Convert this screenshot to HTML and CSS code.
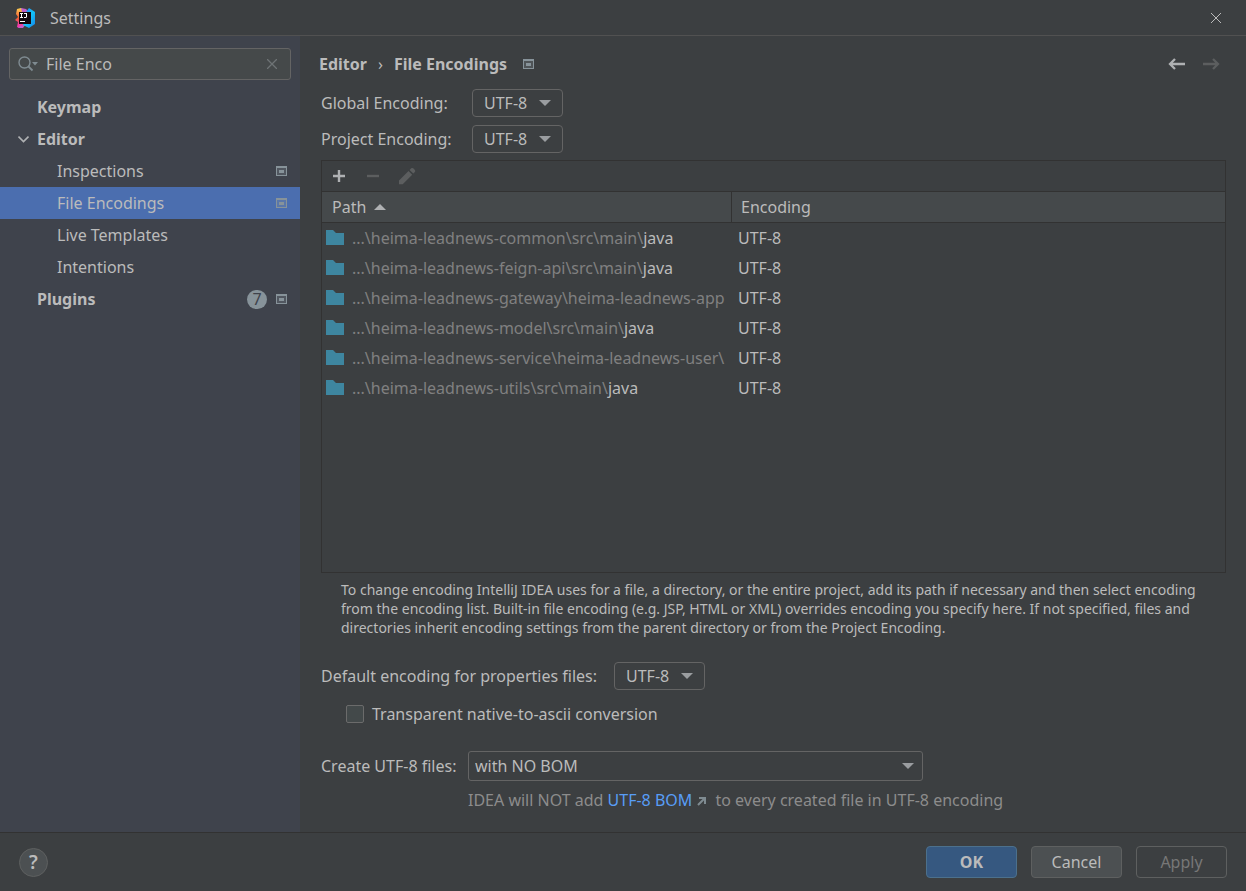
FILE: index.html
```html
<!DOCTYPE html>
<html lang="en">
<head>
<meta charset="utf-8">
<title>Settings</title>
<link rel="stylesheet" href="styles.css">
</head>
<body>
<svg class="defs" width="0" height="0" aria-hidden="true">
  <symbol id="scope" viewBox="0 0 11 10"><path fill="currentColor" fill-rule="evenodd" d="M0 0h11v10H0zM1 2v7h9V2z"/><path fill="currentColor" opacity=".25" d="M1 2h9v7H1z"/><path fill="currentColor" d="M3 4h5v3H3z"/></symbol>
  <symbol id="folder" viewBox="0 0 18 15"><path fill="#3e86a0" d="M0 0h7l3 3h8v12H0z"/></symbol>
</svg>
<div class="window">
  <header class="titlebar">
    <svg class="logo" viewBox="0 0 20 20" aria-hidden="true">
      <defs>
        <linearGradient id="warm" x1="0" y1="0" x2="0" y2="1"><stop offset="0" stop-color="#fdd251"/><stop offset=".35" stop-color="#f97a3d"/><stop offset=".5" stop-color="#f0602f"/><stop offset=".75" stop-color="#f04590"/><stop offset="1" stop-color="#fe2eb8"/></linearGradient>
        <linearGradient id="cool" x1="0" y1="0" x2="1" y2="1"><stop offset="0" stop-color="#2f6df6"/><stop offset=".5" stop-color="#12c5f8"/><stop offset="1" stop-color="#1682e8"/></linearGradient>
      </defs>
      <path fill="url(#warm)" d="M2 1l4-1 5 3v14l-7 3-2-1 1-5-3-2 3-3-2-3z"/>
      <path fill="#c060c8" d="M6 0l5 1 3 3H7zM3 19l8-3-3 4H4z"/>
      <path fill="url(#cool)" d="M11 4l3-4 6 4v12l-6 4-6-3z"/>
      <path fill="#130a10" d="M4 4h12v12H4z"/>
      <path fill="#fff" d="M5 5h3v1H7v3h1v1H5V9h1V6H5zM9 5h3v4l-1 1H9V9h2V6H9zM5 13h5v1H5z"/>
    </svg>
    <h1 class="title">Settings</h1>
    <button class="icon-button close" aria-label="Close"><svg width="12" height="12" viewBox="0 0 12 12"><path stroke="currentColor" d="M1 1l10 10M11 1L1 11"/></svg></button>
  </header>

  <div class="body">
    <aside class="sidebar">
      <div class="search">
        <svg width="21" height="16" viewBox="0 0 21 16" aria-hidden="true"><circle cx="6.500" cy="6.500" r="5.500" fill="none" stroke="#7f8b91" stroke-width="1.400"/><path stroke="#7f8b91" stroke-width="1.800" d="M10.500 10.500l4 4"/><path fill="#7f8b91" d="M14 6h6l-3 3.500z"/></svg>
        <input class="search-input" type="text" value="File Enco" aria-label="Search settings">
        <button class="icon-button clear" aria-label="Clear"><svg width="10" height="10" viewBox="0 0 10 10"><path stroke="currentColor" stroke-width="1.300" d="M0 0l10 10M10 0L0 10"/></svg></button>
      </div>
      <nav class="tree" aria-label="Settings sections">
        <a class="row top" href="#">Keymap</a>
        <a class="row top" href="#"><svg class="chevron" width="11" height="7" viewBox="0 0 11 7" aria-hidden="true"><path fill="none" stroke="#afb1b3" stroke-width="1.600" d="M.5 .6l5 5 5-5"/></svg>Editor</a>
        <a class="row child" href="#">Inspections<span class="marks"><svg class="scope"><use href="#scope"/></svg></span></a>
        <a class="row child selected" href="#" aria-current="page">File Encodings<span class="marks"><svg class="scope"><use href="#scope"/></svg></span></a>
        <a class="row child" href="#">Live Templates</a>
        <a class="row child" href="#">Intentions</a>
        <a class="row top" href="#">Plugins<span class="marks"><span class="count">7</span><svg class="scope"><use href="#scope"/></svg></span></a>
      </nav>
    </aside>

    <main class="main">
      <div class="heading">
        <h2 class="crumbs"><span>Editor</span><span class="sep">›</span><span>File Encodings</span></h2>
        <svg class="scope"><use href="#scope"/></svg>
        <div class="history">
          <button class="icon-button" aria-label="Back"><svg width="17" height="12" viewBox="0 0 17 12"><path fill="none" stroke="#afb1b3" stroke-width="2.300" d="M17 6H2M7 1L2 6l5 5"/></svg></button>
          <button class="icon-button" aria-label="Forward" disabled><svg width="17" height="12" viewBox="0 0 17 12"><path fill="none" stroke="#5c5e5f" stroke-width="2.300" d="M0 6h15M10 1l5 5-5 5"/></svg></button>
        </div>
      </div>

      <div class="form">
        <div class="encodings">
          <label for="global">Global Encoding:</label>
          <span class="combo"><select id="global"><option>UTF-8</option></select></span>
          <label for="project">Project Encoding:</label>
          <span class="combo"><select id="project"><option>UTF-8</option></select></span>
        </div>

        <section class="panel">
          <div class="toolbar">
            <button class="icon-button" aria-label="Add"><svg width="18" height="18" viewBox="0 0 18 18"><path stroke="#afb1b3" stroke-width="2.400" d="M9 3v12M3 9h12"/></svg></button>
            <button class="icon-button" aria-label="Remove" disabled><svg width="18" height="18" viewBox="0 0 18 18"><path stroke="#5c5e5f" stroke-width="2.400" d="M3 9h12"/></svg></button>
            <button class="icon-button" aria-label="Edit" disabled><svg width="18" height="18" viewBox="0 0 18 18"><path fill="#5c5e5f" d="M1 13.500L10.500 4l3.700 3.700L4.700 17.200H1zM11.600 2.900l1.600-1.600q1-.8 2 0l1.700 1.700q.8 1 0 2l-1.600 1.600z"/></svg></button>
          </div>
          <table class="files">
            <colgroup><col class="path-col"><col></colgroup>
            <thead><tr><th aria-sort="ascending">Path<span class="sort"></span></th><th>Encoding</th></tr></thead>
            <tbody>
              <tr><td><svg class="folder"><use href="#folder"/></svg>...\heima-leadnews-common\src\main\<b>java</b></td><td>UTF-8</td></tr>
              <tr><td><svg class="folder"><use href="#folder"/></svg>...\heima-leadnews-feign-api\src\main\<b>java</b></td><td>UTF-8</td></tr>
              <tr><td><svg class="folder"><use href="#folder"/></svg>...\heima-leadnews-gateway\heima-leadnews-app</td><td>UTF-8</td></tr>
              <tr><td><svg class="folder"><use href="#folder"/></svg>...\heima-leadnews-model\src\main\<b>java</b></td><td>UTF-8</td></tr>
              <tr><td><svg class="folder"><use href="#folder"/></svg>...\heima-leadnews-service\heima-leadnews-user\</td><td>UTF-8</td></tr>
              <tr><td><svg class="folder"><use href="#folder"/></svg>...\heima-leadnews-utils\src\main\<b>java</b></td><td>UTF-8</td></tr>
            </tbody>
          </table>
        </section>

        <p class="help">To change encoding IntelliJ IDEA uses for a file, a directory, or the entire project, add its path if necessary and then select encoding<br>from the encoding list. Built-in file encoding (e.g. JSP, HTML or XML) overrides encoding you specify here. If not specified, files and<br>directories inherit encoding settings from the parent directory or from the Project Encoding.</p>

        <div class="field properties">
          <label for="props">Default encoding for properties files:</label>
          <span class="combo"><select id="props"><option>UTF-8</option></select></span>
        </div>
        <label class="check"><input type="checkbox">Transparent native-to-ascii conversion</label>
        <div class="bom">
          <label for="bom">Create UTF-8 files:</label>
          <span class="combo wide"><select id="bom"><option>with NO BOM</option></select></span>
          <p class="hint">IDEA will NOT add <a href="#">UTF-8 BOM<svg class="external" width="9" height="9" viewBox="0 0 9 9" aria-hidden="true"><path fill="none" stroke="#7f8b91" stroke-width="2" d="M1 8l6-6M2 1h6v6"/></svg></a> to every created file in UTF-8 encoding</p>
        </div>
      </div>
    </main>
  </div>

  <footer class="footer">
    <button class="help-button" aria-label="Help">?</button>
    <div class="actions">
      <button class="button primary">OK</button>
      <button class="button">Cancel</button>
      <button class="button" disabled>Apply</button>
    </div>
  </footer>
</div>
</body>
</html>
```
FILE: styles.css
```css
* { box-sizing: border-box; }

body {
  margin: 0;
  background: #3c3f41;
  color: #bbbbbb;
  font: 16px/20px "Noto Sans", "Open Sans", sans-serif;
}

h1, h2, p { margin: 0; font-size: inherit; }
button, input, select { margin: 0; color: inherit; font: inherit; }
a { color: inherit; text-decoration: none; }
svg { flex: none; }
.defs { position: absolute; }

.window { display: flex; flex-direction: column; min-height: 100vh; }

.icon-button {
  display: flex;
  padding: 0;
  border: 0;
  background: none;
}

.titlebar {
  display: flex;
  align-items: center;
  height: 36px;
  padding: 0 24px 0 15px;
  border-bottom: 1px solid #515151;
}
.logo { width: 20px; height: 20px; }
.title { margin-left: 15px; font-weight: 400; }
.close { margin-left: auto; }

.body { display: flex; flex: 1; }

.sidebar { width: 300px; flex: none; background: #3f434c; }
.search {
  display: flex;
  align-items: center;
  height: 32px;
  margin: 12px 9px 11px;
  padding: 0 13px 0 8px;
  border: 1px solid #646464;
  border-radius: 3px;
  background: #45494a;
}
.search-input {
  flex: 1;
  min-width: 0;
  padding: 0 7px;
  border: 0;
  outline: 0;
  background: none;
}
.clear { color: #6e7375; }

.row {
  display: flex;
  align-items: center;
  height: 32px;
  padding: 0 13px 0 37px;
}
.top { font-weight: 700; }
.child { padding-left: 57px; }
.selected { background: #4b6eaf; }
.chevron { margin: 0 8px 0 -19px; }
.marks { display: flex; align-items: center; gap: 9px; margin-left: auto; }
.scope { width: 11px; height: 10px; color: #87939a; }
.count {
  width: 20px;
  border-radius: 10px;
  background: #87939a;
  color: #3f434c;
  font-size: 16px;
  font-weight: 400;
  line-height: 19px;
  text-align: center;
}

.main { display: flex; flex: 1; flex-direction: column; min-width: 0; padding: 18px 20px 22px 19px; }
.heading { display: flex; align-items: center; gap: 16px; }
.crumbs { display: flex; gap: 11px; font-weight: 700; }
.sep { font-weight: 400; }
.history { display: flex; gap: 18px; margin-left: auto; padding-right: 6px; }

.form { display: flex; flex: 1; flex-direction: column; padding: 15px 0 0 2px; }
.encodings {
  display: grid;
  grid-template-columns: 133px max-content;
  align-items: center;
  gap: 8px 18px;
}
.encodings label { white-space: nowrap; }

.combo { display: grid; align-items: center; }
.combo select {
  grid-area: 1 / 1;
  width: 91px;
  height: 28px;
  padding: 0 11px;
  border: 1px solid #646464;
  border-radius: 4px;
  background: none;
  appearance: none;
}
.combo::after {
  grid-area: 1 / 1;
  justify-self: end;
  margin-right: 12px;
  border: 6px solid transparent;
  border-top-color: #9a9da0;
  border-bottom: 0;
  content: "";
  pointer-events: none;
}
.combo.wide select { width: 100%; height: 30px; padding: 0 6px; border-radius: 3px; }
.combo.wide::after { margin-right: 9px; }

.panel { display: flex; flex: 1; flex-direction: column; margin-top: 7px; border: 1px solid #323232; }
.toolbar {
  display: flex;
  align-items: center;
  gap: 16px;
  height: 31px;
  padding: 0 8px;
  border-bottom: 1px solid #323232;
}

.files { width: 100%; border-spacing: 0; table-layout: fixed; }
.path-col { width: 410px; }
.files th {
  height: 31px;
  padding: 0 9px;
  border-bottom: 1px solid #323232;
  background: #45494b;
  font-weight: 400;
  text-align: left;
}
.files th:first-child { padding-left: 10px; border-right: 1px solid #323232; }
.sort {
  display: inline-block;
  margin: 0 0 3px 8px;
  border: 6px solid transparent;
  border-top: 0;
  border-bottom-color: #afb1b3;
}
.files td { height: 30px; padding: 0 6px; overflow: hidden; white-space: nowrap; }
.files td:first-child { padding: 0 0 0 4px; color: #808080; }
.files b { color: #bbbbbb; font-weight: 400; }
.folder { width: 18px; height: 15px; margin-right: 8px; vertical-align: -1px; }

.help { padding: 7px 0 0 20px; font-size: 14px; line-height: 19px; white-space: nowrap; }
.field { display: flex; align-items: center; gap: 17px; }
.properties { margin-top: 25px; }
.check { display: flex; align-items: center; gap: 8px; margin: 14px 0 27px 25px; }
.check input {
  width: 18px;
  height: 18px;
  border: 1px solid #6b6b6b;
  border-radius: 2px;
  background: #43494a;
  appearance: none;
}
.bom {
  display: grid;
  grid-template-columns: 140px minmax(0, 455px) 1fr;
  align-items: center;
  gap: 9px 7px;
}
.bom label { white-space: nowrap; }
.hint { grid-column: 2 / 4; color: #8c8c8c; }
.hint a { color: #589df6; }
.external { margin: 0 5px; }

.footer {
  display: flex;
  align-items: center;
  justify-content: space-between;
  height: 59px;
  padding: 0 19px;
  border-top: 1px solid #323232;
}
.help-button {
  width: 29px;
  height: 29px;
  padding: 0;
  border: 1px solid #5e6060;
  border-radius: 50%;
  background: #4c5052;
  font-size: 19px;
  font-weight: 600;
}
.actions { display: flex; gap: 14px; }
.button {
  width: 91px;
  height: 32px;
  padding: 0;
  border: 1px solid #5e6060;
  border-radius: 4px;
  background: #4c5052;
}
.primary { border-color: #4c708c; background: #365880; font-weight: 700; }
.button:disabled { background: none; color: #777777; }
```
